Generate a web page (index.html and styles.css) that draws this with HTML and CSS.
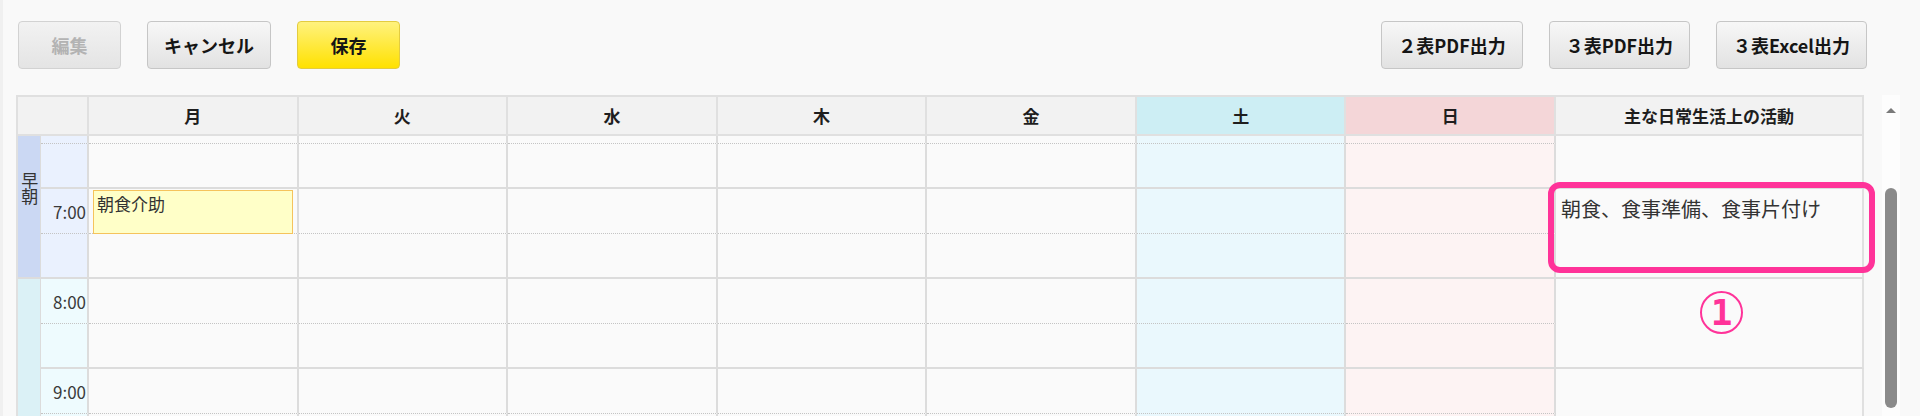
FILE: index.html
```html
<!DOCTYPE html>
<html lang="ja">
<head>
<meta charset="utf-8">
<title>週間計画</title>
<link rel="stylesheet" href="styles.css">
</head>
<body>
<div class="page">
  <div class="toolbar">
    <div class="btn-group">
      <button class="btn btn-disabled">編集</button>
      <button class="btn">キャンセル</button>
      <button class="btn btn-primary">保存</button>
    </div>
    <div class="btn-group">
      <button class="btn">２表PDF出力</button>
      <button class="btn">３表PDF出力</button>
      <button class="btn">３表Excel出力</button>
    </div>
  </div>

  <div class="schedule">
    <div class="table">
      <div class="thead">
        <div class="th th-corner"></div>
        <div class="th">月</div>
        <div class="th">火</div>
        <div class="th">水</div>
        <div class="th">木</div>
        <div class="th">金</div>
        <div class="th th-sat">土</div>
        <div class="th th-sun">日</div>
        <div class="th th-act">主な日常生活上の活動</div>
      </div>
      <div class="tbody-viewport">
        <div class="tbody">
          <!-- 6:00 -->
          <div class="period period-early"><span class="period-label">早朝</span></div>
          <div class="time time-early half-a"></div>
          <div class="cell half-a"></div><div class="cell half-a"></div><div class="cell half-a"></div><div class="cell half-a"></div><div class="cell half-a"></div><div class="cell half-a sat"></div><div class="cell half-a sun"></div>
          <div class="act"></div>
          <div class="time time-early half-b"></div>
          <div class="cell half-b"></div><div class="cell half-b"></div><div class="cell half-b"></div><div class="cell half-b"></div><div class="cell half-b"></div><div class="cell half-b sat"></div><div class="cell half-b sun"></div>
          <!-- 7:00 -->
          <div class="time time-early half-a">7:00</div>
          <div class="cell half-a"><div class="event">朝食介助</div></div><div class="cell half-a"></div><div class="cell half-a"></div><div class="cell half-a"></div><div class="cell half-a"></div><div class="cell half-a sat"></div><div class="cell half-a sun"></div>
          <div class="act act-filled">朝食、食事準備、食事片付け<span class="callout"></span></div>
          <div class="time time-early half-b"></div>
          <div class="cell half-b"></div><div class="cell half-b"></div><div class="cell half-b"></div><div class="cell half-b"></div><div class="cell half-b"></div><div class="cell half-b sat"></div><div class="cell half-b sun"></div>
          <!-- 8:00 -->
          <div class="period period-am"></div>
          <div class="time time-am half-a">8:00</div>
          <div class="cell half-a"></div><div class="cell half-a"></div><div class="cell half-a"></div><div class="cell half-a"></div><div class="cell half-a"></div><div class="cell half-a sat"></div><div class="cell half-a sun"></div>
          <div class="act"><span class="marker">1</span></div>
          <div class="time time-am half-b"></div>
          <div class="cell half-b"></div><div class="cell half-b"></div><div class="cell half-b"></div><div class="cell half-b"></div><div class="cell half-b"></div><div class="cell half-b sat"></div><div class="cell half-b sun"></div>
          <!-- 9:00 -->
          <div class="time time-am half-a">9:00</div>
          <div class="cell half-a"></div><div class="cell half-a"></div><div class="cell half-a"></div><div class="cell half-a"></div><div class="cell half-a"></div><div class="cell half-a sat"></div><div class="cell half-a sun"></div>
          <div class="act"></div>
          <div class="time time-am half-b"></div>
          <div class="cell half-b"></div><div class="cell half-b"></div><div class="cell half-b"></div><div class="cell half-b"></div><div class="cell half-b"></div><div class="cell half-b sat"></div><div class="cell half-b sun"></div>
        </div>
      </div>
    </div>
    <div class="scrollbar">
      <div class="scroll-arrow"></div>
      <div class="scroll-thumb"></div>
    </div>
  </div>
</div>
</body>
</html>
```
FILE: styles.css
```css
* { box-sizing: border-box; }

html, body {
  margin: 0;
  padding: 0;
  background: #f9f9f9;
  height: 416px;
  overflow: hidden;
}

body {
  font-family: "Noto Sans CJK JP", "Noto Sans", sans-serif;
  color: #222;
  border-left: 3px solid #f0f0f0;
}

.page {
  padding: 0 20px 0 13px;
  height: 416px;
  display: flex;
  flex-direction: column;
}

/* ---------- toolbar ---------- */
.toolbar {
  height: 95px;
  padding: 21px 33px 0 2px;
  display: flex;
  justify-content: space-between;
  align-items: flex-start;
}

.btn-group {
  display: flex;
  gap: 26px;
}

.btn {
  height: 48px;
  min-width: 103px;
  padding: 0 16px;
  font-family: "Noto Sans CJK JP", sans-serif;
  font-size: 18px;
  font-weight: 700;
  color: #151515;
  border: 1px solid #c6c6c6;
  border-radius: 4px;
  background: linear-gradient(#f7f7f7, #e2e2e2);
  line-height: 1;
}

.btn-disabled {
  color: #b3b3b3;
  border-color: #d2d2d2;
  background: linear-gradient(#f2f2f2, #e4e4e4);
}

.btn-primary {
  border-color: #e3cc40;
  background: linear-gradient(#fff27e, #ffe100);
}

/* ---------- schedule ---------- */
.schedule {
  flex: 1;
  display: flex;
  min-height: 0;
}

.table {
  width: 1848px;
  display: flex;
  flex-direction: column;
  border-left: 2px solid #e0e0e0;
  border-top: 2px solid #e0e0e0;
}

.thead,
.tbody {
  display: grid;
  grid-template-columns: 23px 48px repeat(7, 1fr) 308px;
}

.thead {
  height: 39px;
}

.th {
  background: #f2f2f2;
  border-right: 2px solid #e0e0e0;
  border-bottom: 2px solid #e0e0e0;
  display: flex;
  align-items: center;
  justify-content: center;
  font-size: 17px;
  font-weight: 700;
  color: #1e1e1e;
}

.th-corner { grid-column: 1 / 3; }
.th-sat { background: #cdeef4; }
.th-sun { background: #f4d6d8; }

.tbody-viewport {
  flex: 1;
  min-height: 0;
  overflow-y: clip;
  overflow-x: visible;
}

.tbody {
  margin-top: -37px;
  grid-auto-rows: 45px;
}

.period {
  grid-column: 1;
  grid-row: span 4;
  border-right: 1px solid #dcdcdc;
  border-bottom: 2px solid #dcdcdc;
  display: flex;
  align-items: center;
  justify-content: center;
}

.period-early { background: #cbd8f3; }
.period-am { background: #dbf1f6; grid-row: span 8; }

.period-label {
  writing-mode: vertical-rl;
  text-orientation: upright;
  font-size: 17px;
  line-height: 1.2;
  letter-spacing: -1px;
  color: #333;
}

.time {
  grid-column: 2;
  border-right: 2px solid #dcdcdc;
  display: flex;
  align-items: center;
  justify-content: flex-end;
  padding-right: 1px;
  font-size: 17px;
  color: #3a3a3a;
}

.time-early { background: #eaf1fe; }
.time-am { background: #eefbfe; }

.cell {
  background: #fafafa;
  border-right: 2px solid #dcdcdc;
}

.half-a { border-bottom: 1px dotted #c4c4c4; }
.half-b { border-bottom: 2px solid #dcdcdc; }

.cell.sat { background: #eaf8fd; }
.cell.sun { background: #fdf3f3; }

.event {
  margin: 1px 4px 0 4px;
  height: 44px;
  background: #ffffc8;
  border: 1px solid #f5c35c;
  padding: 2px 3px;
  font-size: 17px;
  line-height: 1.3;
  color: #333;
}

.act {
  grid-column: 10;
  grid-row: span 2;
  position: relative;
  background: #fafafa;
  border-right: 2px solid #e0e0e0;
  border-bottom: 2px solid #dcdcdc;
}

.act-filled {
  padding: 6px 0 0 5px;
  font-size: 20px;
  line-height: 1.4;
  color: #333;
}

.callout {
  position: absolute;
  left: -8px;
  top: -7px;
  right: -13px;
  bottom: 4px;
  border: 6px solid #ff3399;
  border-radius: 12px;
}

.marker {
  position: absolute;
  left: 144px;
  top: 12px;
  width: 43px;
  height: 43px;
  border: 2px solid #ff3399;
  border-radius: 50%;
  display: flex;
  align-items: center;
  justify-content: center;
  font-family: "DejaVu Sans Mono", monospace;
  font-weight: 700;
  font-size: 36px;
  line-height: 1;
  color: #ff3399;
}

/* ---------- scrollbar ---------- */
.scrollbar {
  width: 18px;
  margin-left: 18px;
  background: #fdfdfd;
  display: flex;
  flex-direction: column;
  align-items: center;
  padding-top: 13px;
}

.scroll-arrow {
  width: 0;
  height: 0;
  border-left: 5.5px solid transparent;
  border-right: 5.5px solid transparent;
  border-bottom: 5px solid #7a7a7a;
}

.scroll-thumb {
  margin-top: 75px;
  width: 12px;
  height: 220px;
  border-radius: 6px;
  background: #8b8b8b;
}
```
